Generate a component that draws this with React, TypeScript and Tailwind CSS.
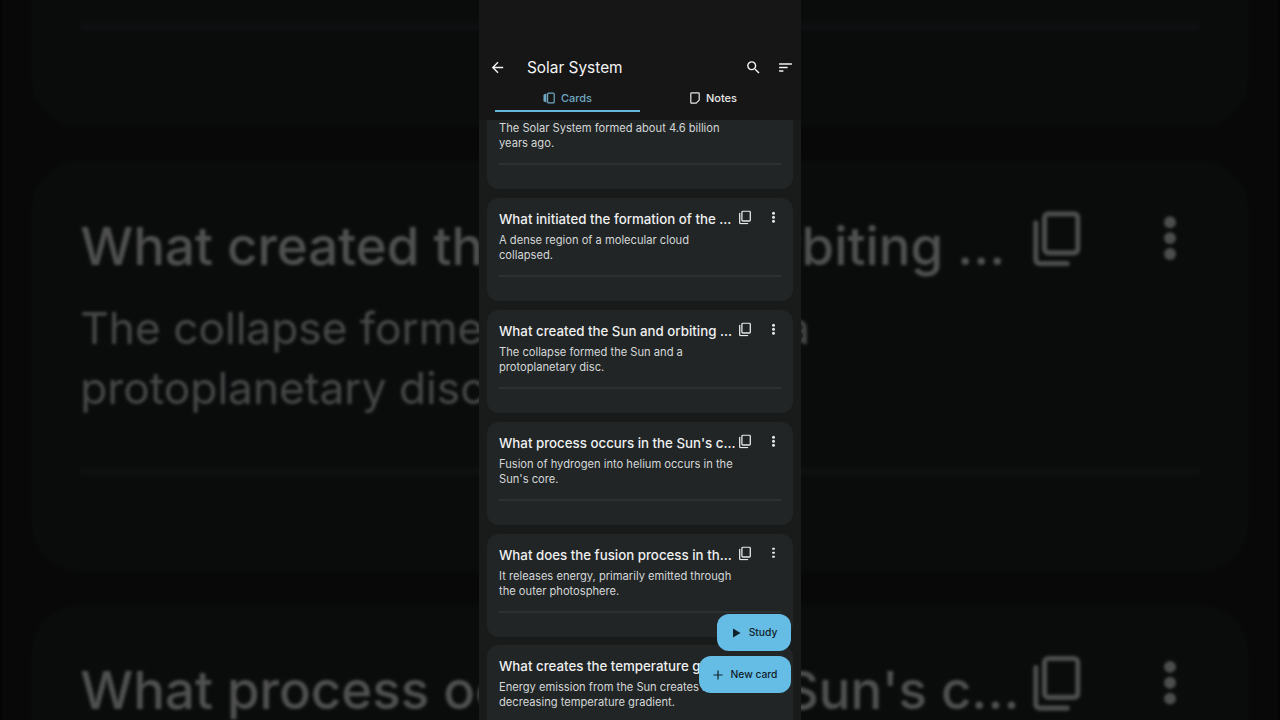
import { MdArrowBack, MdSearch, MdSort } from "react-icons/md";

const cards = [
  { title: "When did the Solar System form?", body: "The Solar System formed about 4.6 billion years ago." },
  { title: "What initiated the formation of the ...", body: "A dense region of a molecular cloud collapsed." },
  { title: "What created the Sun and orbiting ...", body: "The collapse formed the Sun and a protoplanetary disc." },
  { title: "What process occurs in the Sun's c...", body: "Fusion of hydrogen into helium occurs in the Sun's core." },
  { title: "What does the fusion process in th...", body: "It releases energy, primarily emitted through the outer photosphere." },
  { title: "What creates the temperature g...", body: "Energy emission from the Sun creates a decreasing temperature gradient." },
];

function CopyIcon() {
  return (
    <svg width="12" height="14" viewBox="0 0 12 14" fill="none" stroke="currentColor" strokeWidth="1.3">
      <rect x="2.9" y="0.7" width="8.4" height="9.8" rx="1" />
      <path d="M0.7 3v9.2a1 1 0 0 0 1 1h6.9" strokeLinecap="round" />
    </svg>
  );
}

function CardsIcon() {
  return (
    <svg width="12" height="12" viewBox="0 0 12 12" fill="none" stroke="currentColor">
      <rect x="4.6" y="1.1" width="6.6" height="9.8" rx="1" strokeWidth="1.2" />
      <path d="M3.4 1.6v8.8L0.9 9.4a.6.6 0 0 1-.4-.6V3.2a.6.6 0 0 1 .4-.6z" fill="currentColor" stroke="none" />
    </svg>
  );
}

function NoteIcon() {
  return (
    <svg width="10" height="12" viewBox="0 0 10 12" fill="none" stroke="currentColor" strokeWidth="1.2">
      <path d="M1.6 0.8h6.8a.8.8 0 0 1 .8.8v6.6l-3 3H1.6a.8.8 0 0 1-.8-.8V1.6a.8.8 0 0 1 .8-.8z" strokeLinejoin="round" />
    </svg>
  );
}

function Card({ title, body }: { title: string; body: string }) {
  return (
    <div className="h-[103px] shrink-0 rounded-[12px] bg-[#212526] pl-3 pr-3 pt-[11px]">
      <div className="flex h-[21px] items-center">
        <p className="w-[239px] shrink-0 whitespace-nowrap text-[13.3px] font-medium leading-[21px] text-[#eff0f0]">{title}</p>
        <div className="ml-[1px] flex -translate-y-[1.5px] items-center text-[#e6e8e8]">
          <CopyIcon />
          <div className="ml-[21px] flex -translate-y-[0.7px] flex-col gap-[1.2px]">
            <span className="h-[2.8px] w-[2.8px] rounded-full bg-[#e6e8e8]" />
            <span className="h-[2.8px] w-[2.8px] rounded-full bg-[#e6e8e8]" />
            <span className="h-[2.8px] w-[2.8px] rounded-full bg-[#e6e8e8]" />
          </div>
        </div>
      </div>
      <p className="mt-[3px] w-[240px] text-[11.15px] leading-[15px] text-[#d5d8d8]">{body}</p>
      <div className="mt-[12px] h-[2px] bg-[#2c3031]" />
    </div>
  );
}

function PhoneScreen() {
  return (
    <div className="relative flex h-[720px] w-[322px] shrink-0 flex-col overflow-hidden bg-[#161616] font-['Inter',sans-serif]">
      <header className="h-[120px] shrink-0 bg-[#161616] pt-[51px]">
        <div className="flex h-[32px] items-center pl-[10px] pr-[7px] text-[#f4f4f4]">
          <MdArrowBack className="h-[17px] w-[17px]" />
          <h1 className="ml-[21px] flex-1 pt-[1px] text-[15.4px] leading-[32px]">Solar System</h1>
          <MdSearch className="h-[17px] w-[17px]" />
          <MdSort className="ml-[15px] h-[17px] w-[17px]" />
        </div>
        <div className="mx-[16px] flex h-[29px]">
          <div className="flex w-[145px] shrink-0 items-center justify-center gap-[6px] border-b-[2px] border-[#67b6dc] pt-[3px] text-[#6fa9c4]">
            <CardsIcon />
            <span className="text-[11px] font-medium">Cards</span>
          </div>
          <div className="flex w-[145px] shrink-0 items-center justify-center gap-[6px] pl-[2px] pt-[1px] text-[#e8e8e8]">
            <NoteIcon />
            <span className="text-[11px] font-medium">Notes</span>
          </div>
        </div>
      </header>
      <main className="min-h-0 flex-1 overflow-hidden bg-[#191b1b] px-[8px]">
        <div className="-mt-[34px] flex flex-col gap-[8.9px]">
          {cards.map((c) => (
            <Card key={c.title} title={c.title} body={c.body} />
          ))}
        </div>
      </main>
      <div className="absolute bottom-[27px] right-[10px] flex flex-col items-end gap-[5px] text-[#10222c]">
        <button className="flex h-[37px] w-[74px] items-center justify-center gap-[8px] rounded-[12px] bg-[#65bde6] pl-[1px] text-[10.3px] font-medium">
          <svg width="9" height="10" viewBox="0 0 9 10" fill="currentColor">
            <path d="M1 0.5L8.5 5L1 9.5z" />
          </svg>
          Study
        </button>
        <button className="flex h-[37px] w-[92px] items-center justify-center gap-[8px] rounded-[12px] bg-[#65bde6] text-[10.3px] font-medium">
          <svg width="10" height="10" viewBox="0 0 10 10" fill="none" stroke="currentColor" strokeWidth="1.2">
            <path d="M5 0.5v9M0.5 5h9" />
          </svg>
          New card
        </button>
      </div>
    </div>
  );
}

export default function App() {
  return (
    <div className="relative flex h-[720px] w-[1280px] justify-center overflow-hidden bg-black">
      {/* enlarged, dimmed copy of the screen behind the video */}
      <div className="absolute inset-0 flex scale-[3.97] justify-center opacity-[0.33] blur-[0.4px]" aria-hidden="true">
        <PhoneScreen />
      </div>
      <div className="relative">
        <PhoneScreen />
      </div>
    </div>
  );
}
